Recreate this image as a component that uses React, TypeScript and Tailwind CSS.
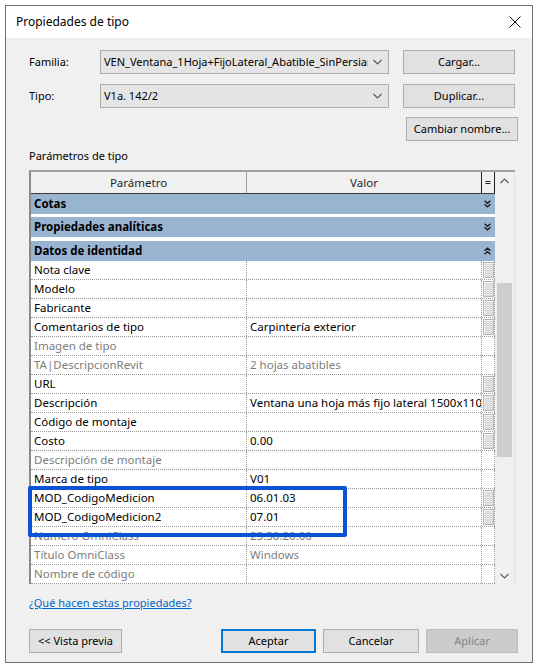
import React from 'react';

type Row = { name: string; value?: string; grey?: boolean; button?: boolean };

const rows: Row[] = [
  { name: 'Nota clave', button: true },
  { name: 'Modelo', button: true },
  { name: 'Fabricante', button: true },
  { name: 'Comentarios de tipo', value: 'Carpintería exterior', button: true },
  { name: 'Imagen de tipo', grey: true },
  { name: 'TA|DescripcionRevit', value: '2 hojas abatibles', grey: true },
  { name: 'URL', button: true },
  { name: 'Descripción', value: 'Ventana una hoja más fijo lateral 1500x1100', button: true },
  { name: 'Código de montaje', button: true },
  { name: 'Costo', value: '0.00', button: true },
  { name: 'Descripción de montaje', grey: true },
  { name: 'Marca de tipo', value: 'V01' },
  { name: 'MOD_CodigoMedicion', value: '06.01.03', button: true },
  { name: 'MOD_CodigoMedicion2', value: '07.01', button: true },
  { name: 'Numero OmniClass', value: '23.30.20.00', grey: true },
  { name: 'Título OmniClass', value: 'Windows', grey: true },
  { name: 'Nombre de código', grey: true },
];

// alturas medidas: las bandas azules tienen 20px y separaciones desiguales
const groups = [
  { name: 'Cotas', open: false, h: 'h-[23px]' },
  { name: 'Propiedades analíticas', open: false, h: 'h-[24px]' },
  { name: 'Datos de identidad', open: true, h: 'h-[20px]' },
];

function DoubleChevron({ up }: { up?: boolean }) {
  return (
    <svg width="7" height="8" viewBox="0 0 7 8" className={up ? 'rotate-180' : ''}>
      <path d="M0.5 0.8 L3.5 3.3 L6.5 0.8 M0.5 4.3 L3.5 6.8 L6.5 4.3" fill="none" stroke="#1a1a1a" strokeWidth="1.3" />
    </svg>
  );
}

function Chevron({ up, color = '#606060' }: { up?: boolean; color?: string }) {
  return (
    <svg width="9" height="6" viewBox="0 0 9 6" className={up ? 'rotate-180' : ''}>
      <path d="M0.5 1 L4.5 5 L8.5 1" fill="none" stroke={color} strokeWidth="1.2" />
    </svg>
  );
}

function Combo({ text }: { text: string }) {
  return (
    <div className="flex h-[24px] w-[289px] items-center border border-[#adadad] bg-[#e5e5e5] pl-[3px] pr-[6px]">
      <span className="min-w-0 flex-1 overflow-hidden whitespace-nowrap text-[11px] text-black">{text}</span>
      <span className="ml-[4px] flex w-[10px] justify-center">
        <Chevron color="#5a5a5a" />
      </span>
    </div>
  );
}

function Button({ label, className = '' }: { label: string; className?: string }) {
  return (
    <div className={`flex h-[24px] items-center justify-center border border-[#adadad] bg-[#e1e1e1] text-[11px] text-black ${className}`}>
      {label}
    </div>
  );
}

export default function App() {
  return (
    <div className="h-[670px] w-[536px] bg-white pl-[5px] pt-[5px] font-['Noto_Sans',sans-serif]">
      <div className="flex h-[658px] w-[528px] flex-col border border-[#6f6f6f] bg-[#f0f0f0]">
        <div className="flex h-[32px] items-center justify-between bg-white pl-[10px] pr-[11px]">
          <span className="text-[12px] text-black">Propiedades de tipo</span>
          <svg width="12" height="12" viewBox="0 0 12 12">
            <path d="M0.5 0.5 L11.5 11.5 M11.5 0.5 L0.5 11.5" stroke="#111" strokeWidth="1" />
          </svg>
        </div>

        <div className="flex flex-1 flex-col pl-[23px] pr-[14px] pt-[12px]">
          <div className="flex items-center">
            <span className="w-[71px] text-[11px] text-black">Familia:</span>
            <Combo text="VEN_Ventana_1Hoja+FijoLateral_Abatible_SinPersiana" />
            <Button label="Cargar..." className="ml-[14px] w-[112px]" />
          </div>
          <div className="mt-[10px] flex items-center">
            <span className="w-[71px] text-[11px] text-black">Tipo:</span>
            <Combo text="V1a. 142/2" />
            <Button label="Duplicar..." className="ml-[14px] w-[112px]" />
          </div>
          <div className="mt-[9px] flex justify-end">
            <Button label="Cambiar nombre..." className="w-[112px]" />
          </div>

          <div className="mt-[8px] h-[14px] text-[11px] leading-[14px] text-black">Parámetros de tipo</div>

          <div className="relative mt-[7px]">
            <div className="flex h-[414px] w-[486px] overflow-hidden border-l-2 border-t-2 border-l-[#8a8a8a] border-t-[#a0a0a0] bg-white">
              <div className="flex w-[464px] flex-col">
                <div className="flex h-[22px] shrink-0 border-b border-[#3c3c3c] bg-[#f0f0f0] text-[11.5px] text-[#1f1f1f]">
                  <div className="flex w-[216px] items-center justify-center border-r border-[#a0a0a0]">Parámetro</div>
                  <div className="flex w-[235px] items-center justify-center border-r border-[#1f1f1f]">Valor</div>
                  <div className="flex w-[13px] items-center justify-center border-r border-[#1f1f1f] text-[11px]">=</div>
                </div>
                {groups.map((g) => (
                  <div key={g.name} className={`flex shrink-0 flex-col ${g.h}`}>
                    <div className="flex h-[20px] items-center justify-between bg-[#99b4d1] pl-[3px] pr-[4px] text-[11.5px] font-bold text-black">
                      <span>{g.name}</span>
                      <DoubleChevron up={g.open} />
                    </div>
                  </div>
                ))}
                {rows.map((r) => (
                  <div
                    key={r.name}
                    className={`flex h-[19px] shrink-0 border-b border-dotted border-[#9a9a9a] text-[11.5px] leading-[18px] ${r.grey ? 'text-[#7d7d7d]' : 'text-black'}`}
                  >
                    <div className="w-[216px] overflow-hidden whitespace-nowrap border-r border-dotted border-[#9a9a9a] pl-[3px]">{r.name}</div>
                    <div className="w-[235px] overflow-hidden whitespace-nowrap border-r border-dotted border-[#9a9a9a] pl-[3px]">{r.value ?? ''}</div>
                    <div className="flex w-[13px] items-start justify-center border-r border-dotted border-[#9a9a9a] pt-[1px]">
                      {r.button && <div className="h-[16px] w-[11px] border border-[#b4b4b4] bg-[#dedede] shadow-[inset_1px_1px_0_#f4f4f4]" />}
                    </div>
                  </div>
                ))}
              </div>

              <div className="flex w-[20px] flex-col border-r border-[#e3e3e3] bg-[#f0f0f0]">
                <div className="flex h-[17px] items-center justify-center">
                  <Chevron up />
                </div>
                <div className="flex-1">
                  <div className="mx-[2px] mt-[94px] h-[174px] bg-[#cdcdcd]" />
                </div>
                <div className="flex h-[17px] items-center justify-center">
                  <Chevron />
                </div>
              </div>
            </div>
            <div className="absolute left-[-1px] top-[316px] h-[51px] w-[319px] rounded-[2px] border-4 border-[#0a52d6]" />
          </div>

          <div className="mt-[11px] h-[16px] text-[11px] leading-[16px] text-[#0066cc] underline">¿Qué hacen estas propiedades?</div>

          <div className="mt-[18px] flex items-center">
            <Button label="<< Vista previa" className="w-[93px]" />
            <div className="ml-auto flex gap-[7px]">
              <div className="flex h-[24px] w-[95px] items-center justify-center border-2 border-[#0078d7] bg-[#e1e1e1] text-[11px] text-black">Aceptar</div>
              <Button label="Cancelar" className="w-[96px]" />
              <div className="flex h-[24px] w-[92px] items-center justify-center border border-[#bfbfbf] bg-[#cccccc] text-[11px] text-[#838383]">Aplicar</div>
            </div>
          </div>
        </div>
      </div>
    </div>
  );
}
